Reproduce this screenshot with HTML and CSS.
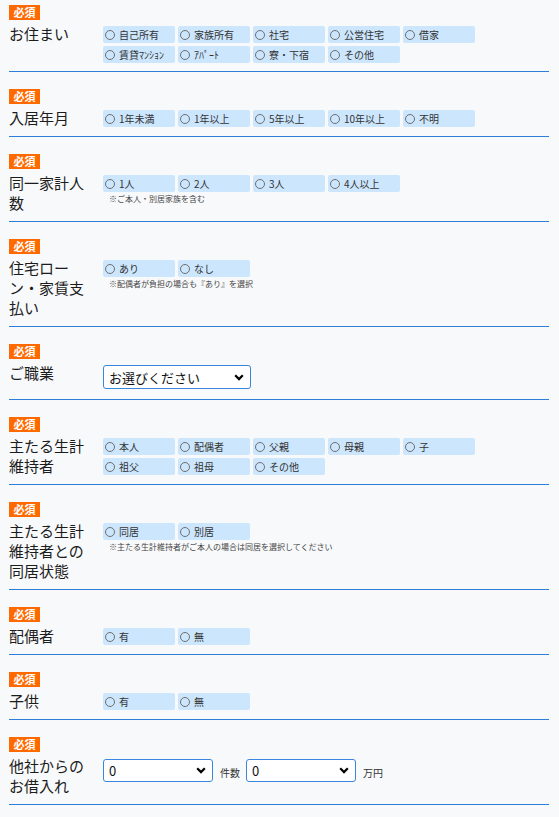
FILE: index.html
```html
<!doctype html>
<html>
<head>
<meta charset="utf-8">
<title>お客様情報</title>
<link rel="stylesheet" href="styles.css">
</head>
<body>
<div class="form">

	<div class="row first">
		<span class="req">必須</span>
		<div class="line">
			<div class="label">お住まい</div>
			<div class="field">
				<div class="radios">
					<label class="opt"><input type="radio" name="home"><span>自己所有</span></label>
					<label class="opt"><input type="radio" name="home"><span>家族所有</span></label>
					<label class="opt"><input type="radio" name="home"><span>社宅</span></label>
					<label class="opt"><input type="radio" name="home"><span>公営住宅</span></label>
					<label class="opt"><input type="radio" name="home"><span>借家</span></label>
					<label class="opt"><input type="radio" name="home"><span>賃貸ﾏﾝｼｮﾝ</span></label>
					<label class="opt"><input type="radio" name="home"><span>ｱﾊﾟｰﾄ</span></label>
					<label class="opt"><input type="radio" name="home"><span>寮・下宿</span></label>
					<label class="opt"><input type="radio" name="home"><span>その他</span></label>
				</div>
			</div>
		</div>
	</div>

	<div class="row">
		<span class="req">必須</span>
		<div class="line">
			<div class="label">入居年月</div>
			<div class="field">
				<div class="radios">
					<label class="opt"><input type="radio" name="years"><span>1年未満</span></label>
					<label class="opt"><input type="radio" name="years"><span>1年以上</span></label>
					<label class="opt"><input type="radio" name="years"><span>5年以上</span></label>
					<label class="opt"><input type="radio" name="years"><span>10年以上</span></label>
					<label class="opt"><input type="radio" name="years"><span>不明</span></label>
				</div>
			</div>
		</div>
	</div>

	<div class="row">
		<span class="req">必須</span>
		<div class="line">
			<div class="label">同一家計人<br>数</div>
			<div class="field">
				<div class="radios">
					<label class="opt"><input type="radio" name="family"><span>1人</span></label>
					<label class="opt"><input type="radio" name="family"><span>2人</span></label>
					<label class="opt"><input type="radio" name="family"><span>3人</span></label>
					<label class="opt"><input type="radio" name="family"><span>4人以上</span></label>
				</div>
				<p class="note">※ご本人・別居家族を含む</p>
			</div>
		</div>
	</div>

	<div class="row">
		<span class="req">必須</span>
		<div class="line">
			<div class="label">住宅ロー<br>ン・家賃支<br>払い</div>
			<div class="field">
				<div class="radios">
					<label class="opt"><input type="radio" name="loan"><span>あり</span></label>
					<label class="opt"><input type="radio" name="loan"><span>なし</span></label>
				</div>
				<p class="note">※配偶者が負担の場合も『あり』を選択</p>
			</div>
		</div>
	</div>

	<div class="row">
		<span class="req">必須</span>
		<div class="line">
			<div class="label">ご職業</div>
			<div class="field">
				<select class="job">
					<option>お選びください</option>
				</select>
			</div>
		</div>
	</div>

	<div class="row">
		<span class="req">必須</span>
		<div class="line">
			<div class="label">主たる生計<br>維持者</div>
			<div class="field">
				<div class="radios">
					<label class="opt"><input type="radio" name="earner"><span>本人</span></label>
					<label class="opt"><input type="radio" name="earner"><span>配偶者</span></label>
					<label class="opt"><input type="radio" name="earner"><span>父親</span></label>
					<label class="opt"><input type="radio" name="earner"><span>母親</span></label>
					<label class="opt"><input type="radio" name="earner"><span>子</span></label>
					<label class="opt"><input type="radio" name="earner"><span>祖父</span></label>
					<label class="opt"><input type="radio" name="earner"><span>祖母</span></label>
					<label class="opt"><input type="radio" name="earner"><span>その他</span></label>
				</div>
			</div>
		</div>
	</div>

	<div class="row">
		<span class="req">必須</span>
		<div class="line">
			<div class="label">主たる生計<br>維持者との<br>同居状態</div>
			<div class="field">
				<div class="radios">
					<label class="opt"><input type="radio" name="live"><span>同居</span></label>
					<label class="opt"><input type="radio" name="live"><span>別居</span></label>
				</div>
				<p class="note">※主たる生計維持者がご本人の場合は同居を選択してください</p>
			</div>
		</div>
	</div>

	<div class="row">
		<span class="req">必須</span>
		<div class="line">
			<div class="label">配偶者</div>
			<div class="field">
				<div class="radios">
					<label class="opt"><input type="radio" name="spouse"><span>有</span></label>
					<label class="opt"><input type="radio" name="spouse"><span>無</span></label>
				</div>
			</div>
		</div>
	</div>

	<div class="row">
		<span class="req">必須</span>
		<div class="line">
			<div class="label">子供</div>
			<div class="field">
				<div class="radios">
					<label class="opt"><input type="radio" name="child"><span>有</span></label>
					<label class="opt"><input type="radio" name="child"><span>無</span></label>
				</div>
			</div>
		</div>
	</div>

	<div class="row">
		<span class="req">必須</span>
		<div class="line">
			<div class="label">他社からの<br>お借入れ</div>
			<div class="field">
				<div class="debt">
					<select class="num"><option>0</option></select>
					<span class="unit">件数</span>
					<select class="num"><option>0</option></select>
					<span class="unit">万円</span>
				</div>
			</div>
		</div>
	</div>

</div>
</body>
</html>
```
FILE: styles.css
```css
body,*{
	padding:0px;
	margin:0px;
	box-sizing:border-box;
}

body{
	background:#f8f9fb;
	color:#222;
	font-family:"Noto Sans CJK JP","Noto Sans",sans-serif;
}

.form{
	padding:0 10px 0 9px;
}

.row{
	padding:17px 0 8px;
	border-bottom:1px solid #2b7fd8;
}

.row.first{
	padding-top:5px;
}

.req{
	display:block;
	background:#ff6a00;
	color:#fff;
	font-size:11px;
	font-weight:bold;
	line-height:15px;
	height:15px;
	width:31px;
	text-align:center;
}

.line{
	display:flex;
	margin-top:4px;
}

.label{
	width:94px;
	flex-shrink:0;
	font-size:15px;
	line-height:20px;
	color:#1c1c1c;
}

.field{
	padding-top:2px;
}

.radios{
	display:flex;
	flex-wrap:wrap;
	gap:3px;
	max-width:380px;
}

.opt{
	display:flex;
	align-items:center;
	width:72px;
	height:17px;
	background:#cce6fd;
	border-radius:2px;
	font-size:10px;
	color:#333;
	cursor:pointer;
}

.opt input{
	appearance:none;
	-webkit-appearance:none;
	flex-shrink:0;
	width:10px;
	height:10px;
	border:1px solid #6f6f6f;
	border-radius:50%;
	margin:0 4px 0 2px;
	background:transparent;
}

.note{
	font-size:8px;
	line-height:10px;
	color:#444;
	margin:2px 0 0 6px;
}

select{
	appearance:none;
	-webkit-appearance:none;
	display:block;
	font-family:"Noto Sans CJK JP","Noto Sans",sans-serif;
	background:#fff url("data:image/svg+xml,%3Csvg xmlns='http://www.w3.org/2000/svg' width='10' height='7' viewBox='0 0 10 7'%3E%3Cpath d='M1.2 1.3 5 5.1 8.8 1.3' fill='none' stroke='%23000' stroke-width='2.2'/%3E%3C/svg%3E") no-repeat right 6px center;
	border:1px solid #3a86dc;
	border-radius:3px;
	color:#111;
}

.job{
	width:148px;
	height:24px;
	font-size:13px;
	padding-left:5px;
	margin-bottom:2px;
}

.debt{
	display:flex;
	align-items:center;
	margin-top:1px;
}

.num{
	width:110px;
	height:23px;
	font-size:13px;
	padding-left:5px;
}

.unit{
	font-size:10px;
	color:#333;
	margin:4px 6px 0 7px;
}
```
